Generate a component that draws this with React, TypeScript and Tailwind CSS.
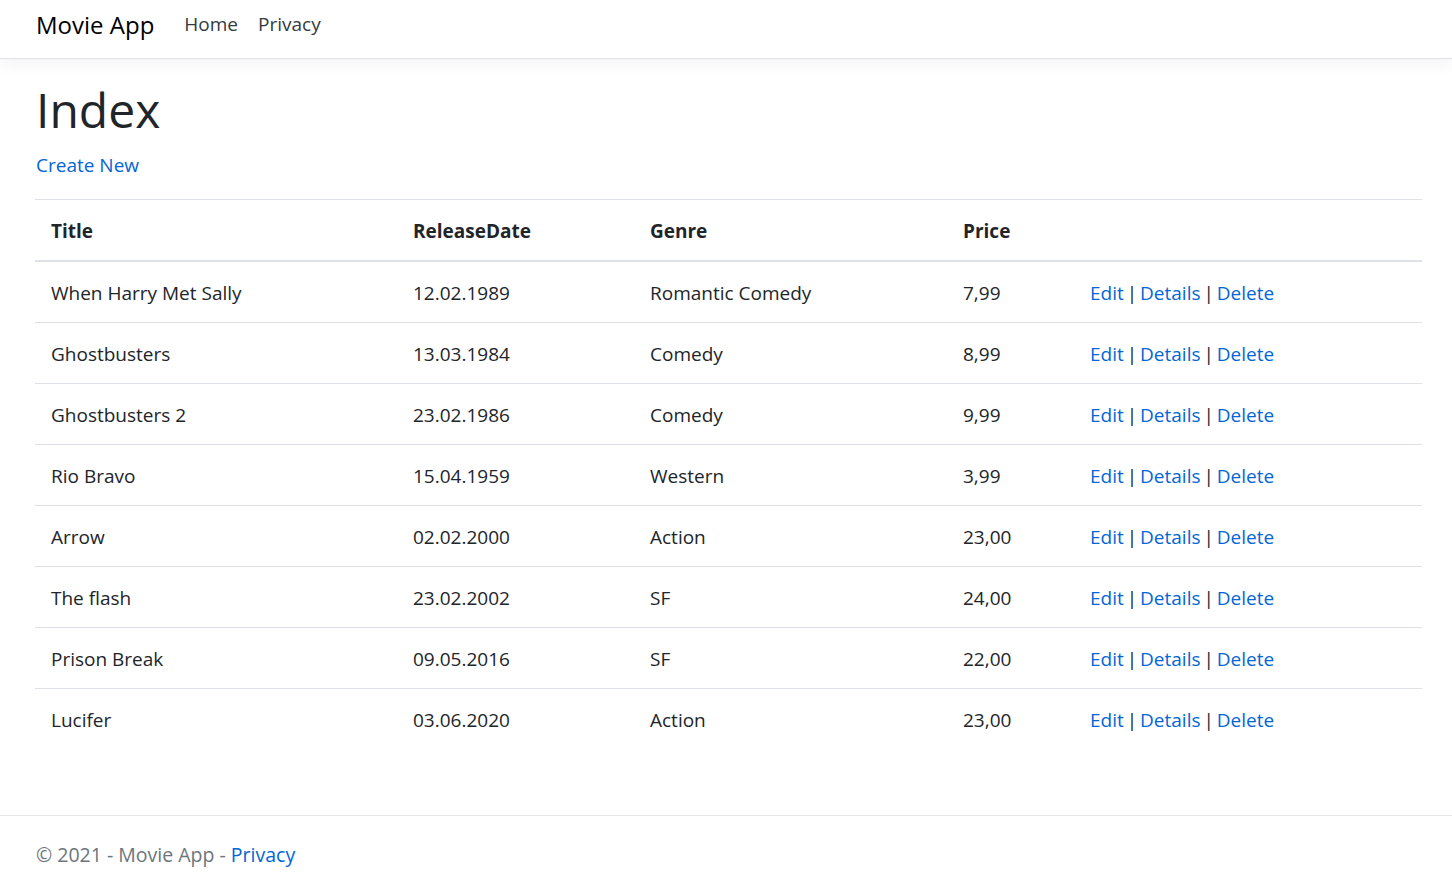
import React from "react";

const movies = [
  ["When Harry Met Sally", "12.02.1989", "Romantic Comedy", "7,99"],
  ["Ghostbusters", "13.03.1984", "Comedy", "8,99"],
  ["Ghostbusters 2", "23.02.1986", "Comedy", "9,99"],
  ["Rio Bravo", "15.04.1959", "Western", "3,99"],
  ["Arrow", "02.02.2000", "Action", "23,00"],
  ["The flash", "23.02.2002", "SF", "24,00"],
  ["Prison Break", "09.05.2016", "SF", "22,00"],
  ["Lucifer", "03.06.2020", "Action", "23,00"],
];

export default function App() {
  return (
    <div className="min-h-[882px] bg-white text-[#212529] font-['Open_Sans',sans-serif] text-[19px]">
      <header className="h-[59px] border-b border-[#dee2e6] bg-white shadow-[0_5px_15px_rgba(0,0,0,0.05)] flex items-start pl-[36px]">
        <span className="text-[24px] text-black mr-[20px] leading-[36px] mt-[7px]">Movie App</span>
        <nav className="flex mt-[9px]">
          <a className="px-[10px] text-[#343a40] leading-[30px]">Home</a>
          <a className="px-[10px] text-[#343a40] leading-[30px]">Privacy</a>
        </nav>
      </header>
      <main className="pl-[35px] pr-[30px] pt-[21px] pb-[66px]">
        <h1 className="text-[48px] font-medium leading-[60px] mb-[10px] pl-px">Index</h1>
        <p className="leading-[30px] mb-[19px] pl-px">
          <a className="text-[#0366d6]">Create New</a>
        </p>
        <table className="w-full table-fixed border-collapse">
          <colgroup>
            <col className="w-[362px]" />
            <col className="w-[237px]" />
            <col className="w-[313px]" />
            <col className="w-[127px]" />
            <col />
          </colgroup>
          <thead>
            <tr className="border-t border-[#dee2e6] border-b-2">
              {["Title", "ReleaseDate", "Genre", "Price", ""].map((h, i) => (
                <th key={i} className="text-left font-bold px-[16px] pt-[16px] pb-[14px] leading-[30px]">
                  {h}
                </th>
              ))}
            </tr>
          </thead>
          <tbody>
            {movies.map((m, i) => (
              <tr key={i} className={i > 0 ? "border-t border-[#dee2e6]" : ""}>
                {m.map((c, j) => (
                  <td key={j} className="px-[16px] pt-[16px] pb-[14px] leading-[30px] whitespace-nowrap">
                    {c}
                  </td>
                ))}
                <td className="px-[16px] pt-[16px] pb-[14px] leading-[30px] whitespace-nowrap [word-spacing:-2px]">
                  <a className="text-[#0366d6]">Edit</a> | <a className="text-[#0366d6]">Details</a> |{" "}
                  <a className="text-[#0366d6]">Delete</a>
                </td>
              </tr>
            ))}
          </tbody>
        </table>
      </main>
      <footer className="border-t border-[#e5e5e5] pl-[36px] pt-px leading-[75px] text-[#6c757d] text-[19.5px]">
        © 2021 - Movie App - <a className="text-[#0366d6]">Privacy</a>
      </footer>
    </div>
  );
}
